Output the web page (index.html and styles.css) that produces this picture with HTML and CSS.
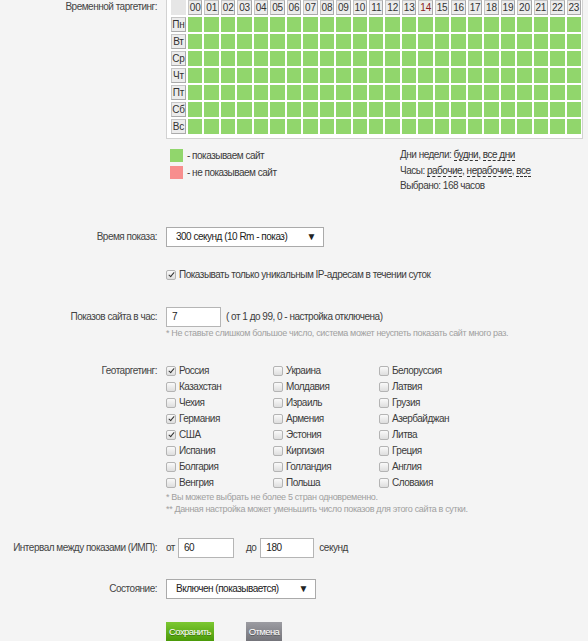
FILE: index.html
```html
<!DOCTYPE html>
<html lang="ru">
<head>
  <meta charset="UTF-8">
  <title>Настройки показа</title>
  <link rel="stylesheet" href="styles.css">
</head>
<body>
  <div class="page">
    <div class="row row-top">
      <div class="label label-top">Временной таргетинг:</div>
      <div class="field">
        <div class="schedule">
          <div class="corner"></div>
          <div class="hour">00</div><div class="hour">01</div><div class="hour">02</div><div class="hour">03</div><div class="hour">04</div><div class="hour">05</div><div class="hour">06</div><div class="hour">07</div><div class="hour">08</div><div class="hour">09</div><div class="hour">10</div><div class="hour">11</div><div class="hour">12</div><div class="hour">13</div><div class="hour hour-now">14</div><div class="hour">15</div><div class="hour">16</div><div class="hour">17</div><div class="hour">18</div><div class="hour">19</div><div class="hour">20</div><div class="hour">21</div><div class="hour">22</div><div class="hour">23</div>
          <div class="day">Пн</div><i></i><i></i><i></i><i></i><i></i><i></i><i></i><i></i><i></i><i></i><i></i><i></i><i></i><i></i><i></i><i></i><i></i><i></i><i></i><i></i><i></i><i></i><i></i><i></i>
          <div class="day">Вт</div><i></i><i></i><i></i><i></i><i></i><i></i><i></i><i></i><i></i><i></i><i></i><i></i><i></i><i></i><i></i><i></i><i></i><i></i><i></i><i></i><i></i><i></i><i></i><i></i>
          <div class="day">Ср</div><i></i><i></i><i></i><i></i><i></i><i></i><i></i><i></i><i></i><i></i><i></i><i></i><i></i><i></i><i></i><i></i><i></i><i></i><i></i><i></i><i></i><i></i><i></i><i></i>
          <div class="day">Чт</div><i></i><i></i><i></i><i></i><i></i><i></i><i></i><i></i><i></i><i></i><i></i><i></i><i></i><i></i><i></i><i></i><i></i><i></i><i></i><i></i><i></i><i></i><i></i><i></i>
          <div class="day">Пт</div><i></i><i></i><i></i><i></i><i></i><i></i><i></i><i></i><i></i><i></i><i></i><i></i><i></i><i></i><i></i><i></i><i></i><i></i><i></i><i></i><i></i><i></i><i></i><i></i>
          <div class="day">Сб</div><i></i><i></i><i></i><i></i><i></i><i></i><i></i><i></i><i></i><i></i><i></i><i></i><i></i><i></i><i></i><i></i><i></i><i></i><i></i><i></i><i></i><i></i><i></i><i></i>
          <div class="day">Вс</div><i></i><i></i><i></i><i></i><i></i><i></i><i></i><i></i><i></i><i></i><i></i><i></i><i></i><i></i><i></i><i></i><i></i><i></i><i></i><i></i><i></i><i></i><i></i><i></i>
        </div>
        <div class="legend">
          <div class="legend-keys">
            <div class="key"><span class="swatch swatch-on"></span>- показываем сайт</div>
            <div class="key"><span class="swatch swatch-off"></span>- не показываем сайт</div>
          </div>
          <div class="legend-quick">
            <div>Дни недели: <a>будни</a>, <a>все дни</a></div>
            <div>Часы: <a>рабочие</a>, <a>нерабочие</a>, <a>все</a></div>
            <div>Выбрано: 168 часов</div>
          </div>
        </div>
      </div>
    </div>

    <div class="row row-show">
      <div class="label">Время показа:</div>
      <div class="field">
        <div class="select select-wide"><span>300 секунд (10 Rm - показ)</span><span class="arrow">▼</span></div>
      </div>
    </div>

    <div class="row row-unique">
      <div class="label"></div>
      <div class="field check"><span class="cb checked"></span>Показывать только уникальным IP-адресам в течении суток</div>
    </div>

    <div class="row row-top row-hour">
      <div class="label label-input">Показов сайта в час:</div>
      <div class="field">
        <div class="inline"><input class="input input-hour" type="text" value="7"><span class="after">( от 1 до 99, 0 - настройка отключена)</span></div>
        <div class="hint">* Не ставьте слишком большое число, система может неуспеть показать сайт много раз.</div>
      </div>
    </div>

    <div class="row row-top row-geo">
      <div class="label label-geo">Геотаргетинг:</div>
      <div class="field">
        <div class="geo">
          <div class="check"><span class="cb checked"></span>Россия</div>
          <div class="check"><span class="cb"></span>Украина</div>
          <div class="check"><span class="cb"></span>Белоруссия</div>
          <div class="check"><span class="cb"></span>Казахстан</div>
          <div class="check"><span class="cb"></span>Молдавия</div>
          <div class="check"><span class="cb"></span>Латвия</div>
          <div class="check"><span class="cb"></span>Чехия</div>
          <div class="check"><span class="cb"></span>Израиль</div>
          <div class="check"><span class="cb"></span>Грузия</div>
          <div class="check"><span class="cb checked"></span>Германия</div>
          <div class="check"><span class="cb"></span>Армения</div>
          <div class="check"><span class="cb"></span>Азербайджан</div>
          <div class="check"><span class="cb checked"></span>США</div>
          <div class="check"><span class="cb"></span>Эстония</div>
          <div class="check"><span class="cb"></span>Литва</div>
          <div class="check"><span class="cb"></span>Испания</div>
          <div class="check"><span class="cb"></span>Киргизия</div>
          <div class="check"><span class="cb"></span>Греция</div>
          <div class="check"><span class="cb"></span>Болгария</div>
          <div class="check"><span class="cb"></span>Голландия</div>
          <div class="check"><span class="cb"></span>Англия</div>
          <div class="check"><span class="cb"></span>Венгрия</div>
          <div class="check"><span class="cb"></span>Польша</div>
          <div class="check"><span class="cb"></span>Словакия</div>
        </div>
        <div class="notes">
          <div>* Вы можете выбрать не более 5 стран одновременно.</div>
          <div>** Данная настройка может уменьшить число показов для этого сайта в сутки.</div>
        </div>
      </div>
    </div>

    <div class="row row-interval">
      <div class="label">Интервал между показами (ИМП):</div>
      <div class="field inline">
        <span>от</span><input class="input input-from" type="text" value="60">
        <span class="to">до</span><input class="input input-to" type="text" value="180">
        <span class="sec">секунд</span>
      </div>
    </div>

    <div class="row row-state">
      <div class="label">Состояние:</div>
      <div class="field">
        <div class="select select-state"><span>Включен (показывается)</span><span class="arrow">▼</span></div>
      </div>
    </div>

    <div class="row row-buttons">
      <div class="label"></div>
      <div class="field buttons">
        <button class="btn btn-save">Сохранить</button>
        <button class="btn btn-cancel">Отмена</button>
      </div>
    </div>
  </div>
</body>
</html>
```

FILE: styles.css
```css
body {
  margin: 0;
  background: #f4f4f4;
  font-family: "Liberation Sans", Arial, sans-serif;
  font-size: 10px;
  letter-spacing: -0.5px;
  color: #3c3c3c;
}
.page {
  margin-top: -5px;
}
.row {
  display: grid;
  grid-template-columns: 157px auto;
  column-gap: 9px;
  align-items: center;
}
.row-top {
  align-items: start;
}
.label {
  text-align: right;
  line-height: 12px;
  color: #444;
}
.label-top {
  margin-top: 6px;
}

/* schedule grid */
.schedule {
  display: grid;
  grid-template-columns: 15px repeat(24, 1fr);
  grid-auto-rows: 15px;
  gap: 2px;
  width: 410px;
  padding: 4px 1px 4px 4px;
  border: 1px solid #d2d2d2;
  background: #fff;
}
.corner {
  background: #e6e6e6;
}
.hour, .day {
  box-sizing: border-box;
  background: #ececec;
  border: 1px solid #c6c6c6;
  border-right-color: #aaa;
  border-bottom-color: #aaa;
  text-align: center;
  line-height: 13px;
  color: #333;
  letter-spacing: -0.2px;
}
.hour-now {
  color: #8a1c1c;
}
.schedule i {
  background: #91d66c;
}

.legend {
  display: flex;
  margin-top: 10px;
  padding-left: 4px;
}
.legend-keys {
  width: 230px;
}
.key {
  display: flex;
  align-items: center;
  gap: 4px;
  height: 13px;
}
.key + .key {
  margin-top: 4px;
}
.swatch {
  width: 13px;
  height: 13px;
}
.swatch-on {
  background: #91d66c;
}
.swatch-off {
  background: #f78e8e;
}
.legend-quick {
  margin-top: -2px;
  line-height: 15.5px;
}
.legend-quick a {
  color: #333;
  border-bottom: 1px dashed #333;
}

/* controls */
.select {
  box-sizing: border-box;
  display: flex;
  align-items: center;
  height: 20px;
  padding: 0 7px 0 9px;
  border: 1px solid #aaa;
  background: #fff;
  color: #222;
}
.select-wide {
  width: 158px;
}
.select-state {
  width: 150px;
}
.arrow {
  margin-left: auto;
  font-size: 10px;
}
.input {
  box-sizing: border-box;
  height: 20px;
  padding: 0 5px;
  border: 1px solid #b5b5b5;
  background: #fff;
  font: inherit;
  letter-spacing: inherit;
  color: #222;
  outline: none;
}
.input-hour {
  width: 55px;
}
.input-from {
  width: 56px;
  margin-left: 3px;
}
.input-to {
  width: 54px;
  margin-left: 4px;
}
.inline {
  display: flex;
  align-items: center;
}
.after {
  margin-left: 5px;
}
.to {
  margin-left: 12px;
}
.sec {
  margin-left: 5px;
}
.hint, .notes {
  line-height: 12px;
  color: #a0a0a0;
  font-size: 9px;
  letter-spacing: -0.35px;
}

/* checkboxes */
.check {
  display: flex;
  align-items: center;
  gap: 3px;
}
.cb {
  position: relative;
  box-sizing: border-box;
  width: 10px;
  height: 10px;
  border: 1px solid #b4b4b4;
  border-radius: 2px;
  background: linear-gradient(#fafafa, #dedede);
}
.cb.checked::after {
  content: "";
  position: absolute;
  left: 2.5px;
  top: 0;
  width: 2px;
  height: 5px;
  border-right: 1.5px solid #333;
  border-bottom: 1.5px solid #333;
  transform: rotate(40deg);
}
.geo {
  display: grid;
  grid-template-columns: 107px 106px auto;
  grid-auto-rows: 16px;
  align-items: center;
}

/* row spacing */
.row-show {
  margin-top: 33px;
}
.row-unique {
  margin-top: 21px;
  line-height: 14px;
}
.row-hour {
  margin-top: 25px;
}
.label-input {
  margin-top: 4px;
}
.row-geo {
  margin-top: 24px;
}
.label-geo {
  margin-top: 2px;
}
.row-interval {
  margin-top: 23px;
}
.row-state {
  margin-top: 21px;
}
.row-buttons {
  margin-top: 23px;
}

.buttons {
  display: flex;
}
.btn {
  height: 19px;
  padding: 0;
  border: none;
  font: inherit;
  font-size: 9.5px;
  letter-spacing: -0.6px;
  color: #fff;
  text-shadow: 0 1px 0 rgba(0, 0, 0, 0.35);
  cursor: pointer;
}
.btn-save {
  width: 48px;
  background: linear-gradient(#7cc832, #4a9a08);
}
.btn-cancel {
  width: 36px;
  margin-left: 32px;
  background: linear-gradient(#9c9ca2, #74747a);
}
```
